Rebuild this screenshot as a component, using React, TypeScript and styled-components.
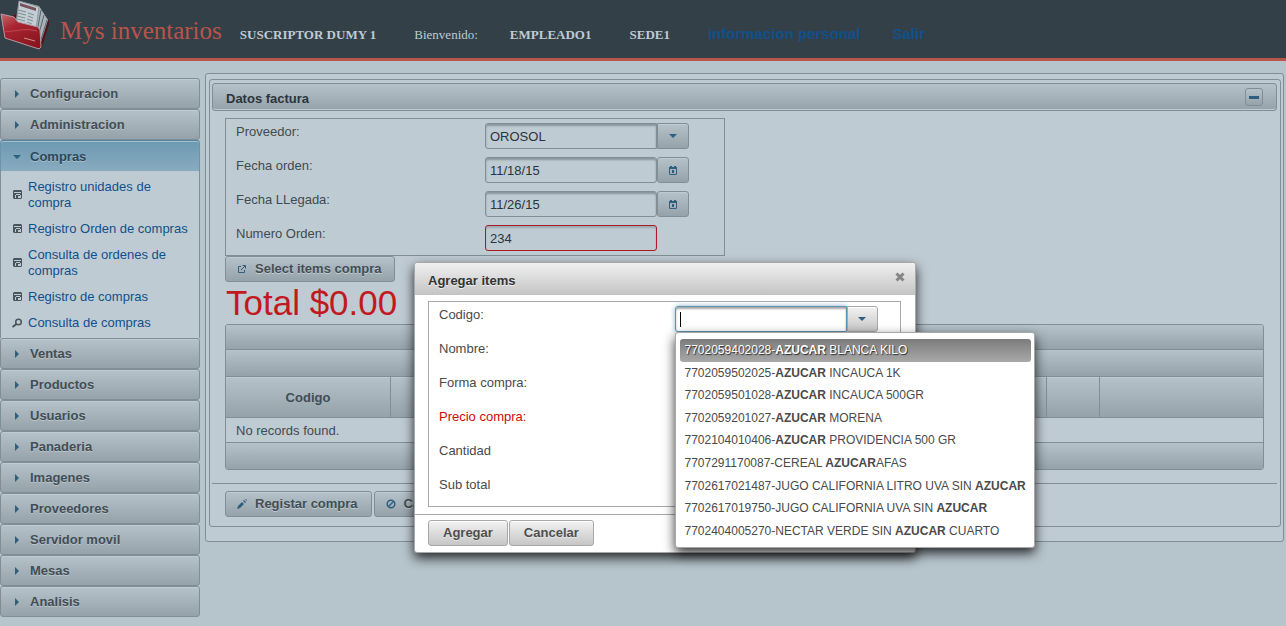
import React from "react";
import styled, { createGlobalStyle, css } from "styled-components";

const line = "#808e96";
const panel = "#bfcbd3";
const bar = "linear-gradient(#b5c2ca, #95a2aa)";
const sans = `"Liberation Sans", Arial, sans-serif`;
const serif = `"Liberation Serif", "Times New Roman", serif`;

const GlobalStyle = createGlobalStyle`
  * { box-sizing: border-box; }
  body { margin: 0; background: #b6c4cc; color: #3f4a52; font: 13px/16px ${sans}; }
  button, input { font: inherit; color: inherit; margin: 0; }
  ul { list-style: none; margin: 0; padding: 0; }
  a { color: #10508b; text-decoration: none; }
  h1, h2 { margin: 0; font-size: 13px; }
`;

const Page = styled.div`
  position: relative;
  min-height: 100vh;
`;

/* ---------- top bar ---------- */

const TopBar = styled.header`
  display: flex;
  height: 61px;
  background: #344048;
  border-bottom: 3px solid #b9544a;
`;

const Brand = styled.h1`
  display: flex;
  gap: 10px;
  color: #b9544a;
  font: 25px/61px ${serif};
`;

const TopNav = styled.nav`
  display: flex;
  gap: 32px;
  margin-left: 18px;
  padding-top: 26px;
  color: #bfcbd3;
  font: 13px/18px ${serif};

  strong { margin-right: 6px; }
  a { font: bold 15px/16px ${sans}; }
`;

/* ---------- layout ---------- */

const Columns = styled.div`
  display: flex;
  align-items: flex-start;
  gap: 5px;
  padding: 12px 2px 8px 0;
`;

const Sidebar = styled.nav`
  flex: none;
  width: 200px;
  margin-top: 5px;
`;

const MenuHeader = styled.button<{ $open?: boolean }>`
  display: flex;
  align-items: center;
  gap: 5px;
  width: 100%;
  height: 31px;
  padding: 0 8px;
  border: 1px solid ${line};
  border-radius: 3px;
  background: ${bar};
  box-shadow: inset 0 1px 0 #bfcbd3;
  text-align: left;
  font-weight: bold;
  color: #424d54;
  text-shadow: 0 1px 0 rgba(255, 255, 255, 0.3);
  ${(p) =>
    p.$open &&
    css`
      padding-top: 1px;
      border-color: #56849f #6b94ab;
      border-bottom: 0;
      border-radius: 3px 3px 0 0;
      background: linear-gradient(#6d99b3, #88abbf);
      box-shadow: inset 0 1px 0 #a4c0cf;
      color: #2b485a;
    `}
`;

const SubMenu = styled.ul`
  display: flex;
  flex-direction: column;
  gap: 10px;
  padding: 8px 8px 7px;
  border: solid ${line};
  border-width: 0 1px;
  background: ${panel};

  a {
    display: flex;
    align-items: center;
    gap: 3px;
  }
`;

const Outer = styled.main`
  flex: 1;
  min-width: 0;
  padding: 5px 2px 14px 3px;
  border: 1px solid ${line};
  border-radius: 3px;
  background: ${panel};
`;

const Inner = styled.section`
  padding: 3px 3px 9px 2px;
  border: 1px solid ${line};
  border-radius: 3px;
`;

const PanelTitle = styled.div`
  display: flex;
  align-items: center;
  justify-content: space-between;
  height: 28px;
  padding: 0 13px;
  border: 1px solid ${line};
  border-radius: 3px;
  background: ${bar};
  box-shadow: inset 0 -1px 0 #bfcbd3;
  color: #2b353c;

  h2 { padding-top: 3px; }
`;

const Toggle = styled.button`
  display: grid;
  place-items: center;
  width: 18px;
  height: 18px;
  padding: 0;
  border: 1px solid ${line};
  border-radius: 3px;
  background: ${bar};
`;

const PanelBody = styled.div`
  padding: 7px 13px 13px;
`;

const Total = styled.div`
  padding-left: 1px;
  color: #c21820;
  font-size: 35px;
  line-height: 42px;
`;

const Actions = styled.div`
  display: flex;
  gap: 2px;
  padding: 7px 13px 0;
  border-top: 1px solid ${line};
`;

/* ---------- controls ---------- */

const Button = styled.button<{ $light?: boolean; $icon?: boolean }>`
  display: flex;
  align-items: center;
  gap: 5px;
  height: 26px;
  padding: ${(p) => (p.$icon ? "0 13px 0 8px" : "0 14px")};
  border: 1px solid ${(p) => (p.$light ? "#a8a8a8" : line)};
  border-radius: 3px;
  background: ${(p) => (p.$light ? "linear-gradient(#f2f2f2, #c6c6c6)" : bar)};
  box-shadow: inset 0 1px 0 ${(p) => (p.$light ? "#ffffff" : "#bfcbd3")};
  color: ${(p) => (p.$light ? "#4f4f4f" : "#424d54")};
  font-weight: bold;
  text-shadow: 0 1px 0 rgba(255, 255, 255, 0.4);
`;

const IconButton = styled(Button)<{ $joined?: boolean }>`
  justify-content: center;
  width: ${(p) => (p.$light ? "31px" : "32px")};
  padding: 0;
  ${(p) => p.$joined && "border-radius: 0 3px 3px 0;"}
`;

const Fields = styled.div<{ $light?: boolean }>`
  max-width: ${(p) => (p.$light ? "none" : "500px")};
  border: 1px solid ${(p) => (p.$light ? "#a8a8a8" : line)};
`;

const Field = styled.div<{ $error?: boolean }>`
  display: grid;
  grid-template-columns: 1fr 1fr;
  height: 34px;
  padding: 4px 0;

  > * { margin-left: 10px; }
  label {
    padding-top: 1px;
    color: ${(p) => (p.$error ? "#cd0a0a" : "inherit")};
  }
`;

const Control = styled.div`
  position: relative;
  display: flex;
`;

const TextBox = styled.input<{
  $light?: boolean;
  $error?: boolean;
  $active?: boolean;
  $joined?: boolean;
}>`
  width: 172px;
  height: 26px;
  padding: 0 4px;
  border: 1px solid ${(p) => (p.$error ? "#ab1a26" : p.$light ? "#a8a8a8" : line)};
  border-radius: ${(p) => (p.$joined ? "3px 0 0 3px" : "3px")};
  outline: none;
  background: ${(p) => (p.$light ? "#ffffff" : panel)};
  box-shadow: inset 0 2px 2px ${(p) => (p.$light ? "#b4b4b4" : p.$error ? "#9ba9b1" : "#87959d")};
  color: #2b343a;
  ${(p) =>
    p.$active &&
    css`
      border-color: #5f93b0;
      box-shadow: 0 0 5px #85b2cb, inset 0 2px 2px #a8a8a8;
      caret-color: transparent;
    `}
`;

const Caret = styled.span`
  position: absolute;
  left: 5px;
  top: 6px;
  width: 1px;
  height: 15px;
  background: #000000;
`;

/* ---------- items table ---------- */

const TableFrame = styled.div`
  overflow: hidden;
  border: 1px solid ${line};
  border-radius: 3px;
`;

const ItemsTable = styled.table`
  width: 100%;
  table-layout: fixed;
  border-spacing: 0;

  th, td { padding: 1px 10px 0; border-bottom: 1px solid ${line}; }
  td { height: 25px; }
  tfoot td { height: 26px; border-bottom: 0; background: ${bar}; }
`;

const Band = styled.td<{ $tall?: boolean }>`
  && { height: ${(p) => (p.$tall ? "27px" : "25px")}; background: ${bar}; }
`;

const ColumnHead = styled.th`
  height: 41px;
  background: ${bar};
  box-shadow: inset 0 1px 0 #bfcbd3;
  color: #424d54;

  & + & { border-left: 1px solid ${line}; }
`;

/* ---------- dialog ---------- */

const Dialog = styled.section`
  position: absolute;
  left: 414px;
  top: 262px;
  width: 502px;
  border: 1px solid #a8a8a8;
  border-radius: 3px;
  background: #ffffff;
  box-shadow: 0 5px 12px rgba(0, 0, 0, 0.8);
  color: #4a4a4a;
`;

const DialogTitle = styled.div`
  display: flex;
  align-items: center;
  justify-content: space-between;
  height: 32px;
  padding: 0 7px 0 13px;
  border-radius: 3px 3px 0 0;
  background: linear-gradient(#f0f0f0, #c4c4c4);
  color: #333333;
  text-shadow: 0 1px 0 rgba(255, 255, 255, 0.7);

  h2 { padding-top: 3px; }
`;

const Close = styled.button`
  display: flex;
  padding: 0 0 4px;
  border: 0;
  background: none;
`;

const DialogBody = styled.div`
  padding: 6px 14px 7px 13px;
`;

const DialogActions = styled.div`
  display: flex;
  gap: 1px;
  padding: 5px 13px 6px;
  border-top: 1px solid #a8a8a8;
`;

const Suggestions = styled.ul`
  position: absolute;
  z-index: 1;
  left: 0;
  top: 26px;
  display: grid;
  grid-auto-rows: 1fr;
  width: 360px;
  height: 216px;
  padding: 6px 5px 5px 4px;
  border: 1px solid #a8a8a8;
  border-radius: 3px;
  background: #ffffff;
  box-shadow: 0 5px 12px rgba(0, 0, 0, 0.8);
  font-size: 12px;
`;

const Suggestion = styled.li<{ $active?: boolean }>`
  display: flex;
  align-items: center;
  padding: 0 5px;
  border-radius: 3px;
  white-space: pre;
  ${(p) =>
    p.$active &&
    css`
      background: linear-gradient(#7c7c7c, #a8a8a8);
      color: #ffffff;
      text-shadow: 1px 1px 1px rgba(0, 0, 0, 0.7);
    `}
`;

/* ---------- icons ---------- */

const blue = "#2f5f7d";
const gray = "#49545c";

const icons: Record<string, React.ReactNode> = {
  right: <path d="M6 4v8l4-4z" fill={blue} />,
  down: <path d="M4 6h8l-4 4z" fill={blue} />,
  disk: (
    <path
      fill={gray}
      fillRule="evenodd"
      d="M5 3h7l1 1v7l-1 1H5l-1-1V4zM5 5v1h7V5zM6 8v3h1V8zM7 7v1h4V7zM9 9v2h2V9zM11 8v3h1V8z"
    />
  ),
  search: (
    <g fill="none" stroke={gray}>
      <circle cx="9.500" cy="7" r="2.800" strokeWidth="1.500" />
      <path d="M7.500 9L3.500 12" strokeWidth="2" />
    </g>
  ),
  calendar: (
    <path
      fill={blue}
      fillRule="evenodd"
      d="M5 4h2v1h2V4h2v1h1v7l-1 1H5l-1-1V5h1zM5 7v5h6V7zM7 8h2v3H7z"
    />
  ),
  external: (
    <path fill="none" stroke={blue} d="M7 5.500H4.500v6h6V9M8.500 4.500h3v3M11 5L7 9" />
  ),
  pencil: (
    <path fill={blue} d="M3 13l1-3 4-4 2 2-4 4zM9 5l1-1 2 2-1 1zM11 3h1l1 1v1z" />
  ),
  cancel: (
    <g fill="none" stroke={blue} strokeWidth="1.500">
      <circle cx="8" cy="8" r="3.800" />
      <path d="M5.500 10.500l5-5" />
    </g>
  ),
  minus: <path d="M3 7h10v3H3z" fill={blue} />,
  close: (
    <path d="M4.500 4.500l7 7M11.500 4.500l-7 7" fill="none" stroke="#858585" strokeWidth="3" />
  ),
};

const Glyph = styled.svg`
  flex: none;
  width: 16px;
  height: 16px;
`;

const Icon = ({ name }: { name: string }) => (
  <Glyph viewBox="0 0 16 16" aria-hidden="true">
    {icons[name]}
  </Glyph>
);

const Logo = () => (
  <svg width="50" height="58" viewBox="0 0 50 58" aria-hidden="true">
    <defs>
      <linearGradient id="cover" x1="0" y1="0" x2="0.6" y2="1">
        <stop offset="0" stopColor="#c46a70" />
        <stop offset="0.4" stopColor="#a92430" />
        <stop offset="1" stopColor="#8b1620" />
      </linearGradient>
    </defs>
    <path d="M12 16l4-2 26 6 7 0v4l-7 23-2 2z" fill="#53141b" />
    <path d="M19 1l20 5 9 14-7 22-9-8z" fill="#a8b3ba" />
    <path d="M47 20l-7 23M44 15l-6 22M41 10l-4 22" stroke="#59656d" fill="none" />
    <path d="M19 1l20 6-3 22-20-6z" fill="#c3cdd4" stroke="#8a969e" />
    <path d="M20 3l16 5v3L20 6z" fill="#7a5158" />
    <path d="M18 10l8 2M18 13l8 2M17 16l8 2M17 19l8 2M28 13l6 2M28 16l5 2M27 19l6 2M27 22l5 2" stroke="#7f8b93" />
    <path d="M1 14l13 3 4 5 20 5 2 3 1 17-2 2L5 38z" fill="url(#cover)" stroke="#b39aa1" />
    <path d="M3 31c10 2 20-4 34 0" stroke="#bc4a54" fill="none" />
    <path d="M24 38l11 3" stroke="#cf8e92" />
  </svg>
);

/* ---------- data ---------- */

const submenu = [
  ["disk", "Registro unidades de compra"],
  ["disk", "Registro Orden de compras"],
  ["disk", "Consulta de ordenes de compras"],
  ["disk", "Registro de compras"],
  ["search", "Consulta de compras"],
];

const closedMenus = [
  "Ventas", "Productos", "Usuarios", "Panaderia", "Imagenes",
  "Proveedores", "Servidor movil", "Mesas", "Analisis",
];

const products = [
  "7702059402028-AZUCAR BLANCA KILO",
  "7702059502025-AZUCAR INCAUCA 1K",
  "7702059501028-AZUCAR INCAUCA 500GR",
  "7702059201027-AZUCAR MORENA",
  "7702104010406-AZUCAR PROVIDENCIA 500 GR",
  "7707291170087-CEREAL AZUCARAFAS",
  "7702617021487-JUGO CALIFORNIA LITRO UVA SIN AZUCAR",
  "7702617019750-JUGO CALIFORNIA UVA SIN AZUCAR",
  "7702404005270-NECTAR VERDE SIN AZUCAR CUARTO",
];

const itemFields = [
  { id: "nombre", label: "Nombre:" },
  { id: "forma", label: "Forma compra:" },
  { id: "precio", label: "Precio compra:", error: true },
  { id: "cantidad", label: "Cantidad" },
  { id: "subtotal", label: "Sub total" },
];

const Match = ({ text, term }: { text: string; term: string }) => {
  const [before, after] = text.split(term);
  return (
    <span>
      {before}
      <b>{term}</b>
      {after}
    </span>
  );
};

const Menu = ({ title }: { title: string }) => (
  <MenuHeader>
    <Icon name="right" />
    {title}
  </MenuHeader>
);

export default function App() {
  return (
    <Page>
      <GlobalStyle />
      <TopBar>
        <Brand>
          <Logo />
          Mys inventarios
        </Brand>
        <TopNav>
          <strong>SUSCRIPTOR DUMY 1</strong>
          <span>Bienvenido:</span>
          <strong>EMPLEADO1</strong>
          <strong>SEDE1</strong>
          <a href="#personal">informacion personal</a>
          <a href="#salir">Salir</a>
        </TopNav>
      </TopBar>

      <Columns>
        <Sidebar>
          <Menu title="Configuracion" />
          <Menu title="Administracion" />
          <MenuHeader $open aria-expanded="true">
            <Icon name="down" />
            Compras
          </MenuHeader>
          <SubMenu>
            {submenu.map(([icon, text]) => (
              <li key={text}>
                <a href="#compras">
                  <Icon name={icon} />
                  <span>{text}</span>
                </a>
              </li>
            ))}
          </SubMenu>
          {closedMenus.map((title) => (
            <Menu key={title} title={title} />
          ))}
        </Sidebar>

        <Outer>
          <Inner>
            <PanelTitle>
              <h2>Datos factura</h2>
              <Toggle aria-expanded="true">
                <Icon name="minus" />
              </Toggle>
            </PanelTitle>
            <PanelBody>
              <Fields>
                <Field>
                  <label htmlFor="proveedor">Proveedor:</label>
                  <Control>
                    <TextBox id="proveedor" defaultValue="OROSOL" $joined />
                    <IconButton type="button" $joined><Icon name="down" /></IconButton>
                  </Control>
                </Field>
                <Field>
                  <label htmlFor="orden">Fecha orden:</label>
                  <Control>
                    <TextBox id="orden" defaultValue="11/18/15" />
                    <IconButton type="button"><Icon name="calendar" /></IconButton>
                  </Control>
                </Field>
                <Field>
                  <label htmlFor="llegada">Fecha LLegada:</label>
                  <Control>
                    <TextBox id="llegada" defaultValue="11/26/15" />
                    <IconButton type="button"><Icon name="calendar" /></IconButton>
                  </Control>
                </Field>
                <Field>
                  <label htmlFor="numero">Numero Orden:</label>
                  <Control>
                    <TextBox id="numero" defaultValue="234" $error />
                  </Control>
                </Field>
              </Fields>
              <Button $icon>
                <Icon name="external" />
                Select items compra
              </Button>
              <Total>Total $0.00</Total>
              <TableFrame>
                <ItemsTable>
                  <colgroup>
                    <col width="164" />
                    <col />
                    <col width="53" />
                    <col width="164" />
                  </colgroup>
                  <thead>
                    <tr><Band colSpan={4} /></tr>
                    <tr><Band colSpan={4} $tall /></tr>
                    <tr>
                      <ColumnHead>Codigo</ColumnHead>
                      <ColumnHead />
                      <ColumnHead />
                      <ColumnHead />
                    </tr>
                  </thead>
                  <tbody>
                    <tr><td colSpan={4}>No records found.</td></tr>
                  </tbody>
                  <tfoot>
                    <tr><td colSpan={4} /></tr>
                  </tfoot>
                </ItemsTable>
              </TableFrame>
            </PanelBody>
            <Actions>
              <Button $icon>
                <Icon name="pencil" />
                Registar compra
              </Button>
              <Button $icon>
                <Icon name="cancel" />
                Cancelar
              </Button>
            </Actions>
          </Inner>
        </Outer>
      </Columns>

      <Dialog role="dialog" aria-labelledby="dialog-title">
        <DialogTitle>
          <h2 id="dialog-title">Agregar items</h2>
          <Close><Icon name="close" /></Close>
        </DialogTitle>
        <DialogBody>
          <Fields $light>
            <Field>
              <label htmlFor="codigo">Codigo:</label>
              <Control>
                <TextBox id="codigo" $light $active $joined />
                <Caret />
                <IconButton type="button" $light $joined><Icon name="down" /></IconButton>
                <Suggestions role="listbox">
                  {products.map((text, i) => (
                    <Suggestion key={text} role="option" $active={i === 0}>
                      <Match text={text} term="AZUCAR" />
                    </Suggestion>
                  ))}
                </Suggestions>
              </Control>
            </Field>
            {itemFields.map(({ id, label, error }) => (
              <Field key={id} $error={error}>
                <label htmlFor={id}>{label}</label>
                <Control>
                  <TextBox id={id} $light $error={error} />
                </Control>
              </Field>
            ))}
          </Fields>
        </DialogBody>
        <DialogActions>
          <Button $light>Agregar</Button>
          <Button $light>Cancelar</Button>
        </DialogActions>
      </Dialog>
    </Page>
  );
}
